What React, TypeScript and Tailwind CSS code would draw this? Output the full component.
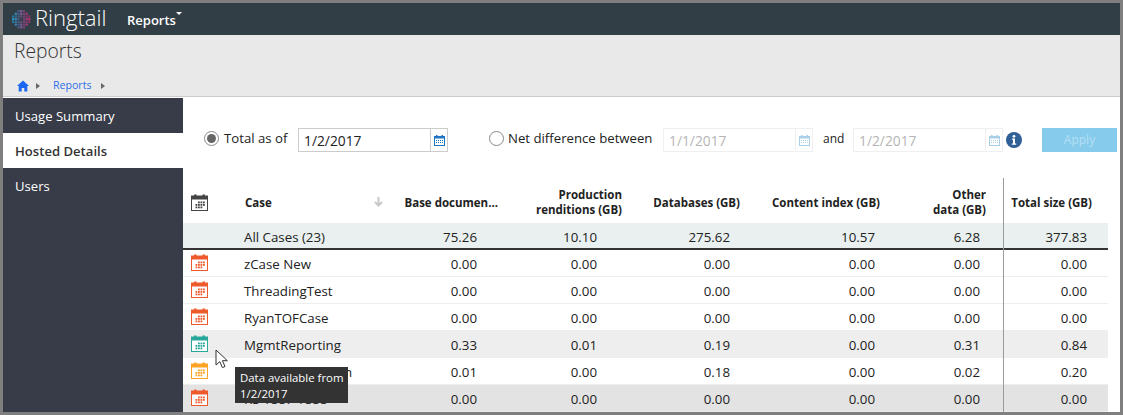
import React from "react";

const FONT = "font-['Open_Sans','Noto_Sans',sans-serif]";

function Logo() {
  const cols = ["#1f9ad0", "#3b86b8", "#566fa6", "#7a5c98", "#96498c", "#ab3a80", "#bb2f78"];
  const mask = [
    [0, 0, 1, 1, 1, 0, 0],
    [0, 1, 1, 1, 1, 1, 0],
    [1, 1, 1, 1, 1, 1, 1],
    [1, 1, 1, 0, 1, 1, 1],
    [1, 1, 1, 1, 1, 1, 1],
    [0, 1, 1, 1, 1, 1, 0],
    [0, 0, 1, 1, 1, 0, 0],
  ];
  return (
    <svg width="19" height="19" viewBox="0 0 19 19" className="shrink-0">
      {mask.map((r, y) =>
        r.map((v, x) =>
          v ? <rect key={x + "-" + y} x={x * 2.7} y={y * 2.7} width="2.2" height="2.2" fill={cols[x]} opacity={y === 2 || y === 4 || x === 2 || x === 4 ? 0.65 : 1} /> : null
        )
      )}
    </svg>
  );
}

function Cal({ color, size = 17 }: { color: string; size?: number }) {
  const dots: React.ReactNode[] = [];
  for (let r = 0; r < 3; r++)
    for (let c = 0; c < 4; c++) {
      if (r === 0 && c === 0) continue;
      if (r === 2 && c === 3) continue;
      dots.push(<rect key={r + "-" + c} x={4.5 + c * 2.5} y={7.5 + r * 2.5} width="1.8" height="1.8" fill={color} />);
    }
  return (
    <svg width={size} height={size} viewBox="0 0 17 17" className="shrink-0">
      <rect x="0.5" y="2" width="16" height="14.5" fill="#fff" stroke={color} />
      <rect x="0" y="2" width="17" height="3.5" fill={color} />
      <rect x="3" y="0.5" width="2.5" height="3" fill={color} />
      <rect x="11.5" y="0.5" width="2.5" height="3" fill={color} />
      {dots}
    </svg>
  );
}

const headPad = ["", "pl-2", "pr-[7px] text-right", "pr-[7px] text-right", "pr-[7px] text-right", "pr-[7px] text-right", "pr-[17px] text-right", "pr-4 text-right border-l border-[#9a9a9a]"];
const cellPad = ["", "pl-[7px] pt-[2px]", "pr-[28px] pt-[2px] text-right", "pr-[32px] pt-[2px] text-right", "pr-[17px] pt-[2px] text-right", "pr-3 pt-[2px] text-right", "pr-[23px] pt-[2px] text-right", "pr-[21px] pt-[2px] text-right border-l border-[#9a9a9a]"];
const GRID = "grid grid-cols-[54px_161px_107px_124px_118px_140px_116px_105px] w-[925px]";

const rows = [
  { n: "zCase New", v: ["0.00", "0.00", "0.00", "0.00", "0.00", "0.00"], c: "#ee5a2c", bg: "bg-white" },
  { n: "ThreadingTest", v: ["0.00", "0.00", "0.00", "0.00", "0.00", "0.00"], c: "#ee5a2c", bg: "bg-white" },
  { n: "RyanTOFCase", v: ["0.00", "0.00", "0.00", "0.00", "0.00", "0.00"], c: "#ee5a2c", bg: "bg-white" },
  { n: "MgmtReporting", v: ["0.33", "0.01", "0.19", "0.00", "0.31", "0.84"], c: "#2aa79b", bg: "bg-[#eeeeee]" },
  { n: "Mgmt Integration", v: ["0.01", "0.00", "0.18", "0.00", "0.02", "0.20"], c: "#fca225", bg: "bg-white" },
  { n: "RS 1887 1888", v: ["0.00", "0.00", "0.00", "0.00", "0.00", "0.00"], c: "#ee5a2c", bg: "bg-[#e3e3e3]" },
];

const heads: React.ReactNode[] = [
  <span>Base documen...</span>,
  <span>Production<br />renditions (GB)</span>,
  <span>Databases (GB)</span>,
  <span>Content index (GB)</span>,
  <span>Other<br />data (GB)</span>,
  <span>Total size (GB)</span>,
];

function DateBox({ value, disabled }: { value: string; disabled?: boolean }) {
  const c = disabled ? "#a9cfe9" : "#1f74c4";
  return (
    <div className={"flex h-6 w-[150px] border " + (disabled ? "border-[#efefef] text-[#b5b5b5]" : "border-[#cccccc] text-[#222]")}>
      <div className="flex-1 pl-[5px] text-[13.8px] leading-[24px]">{value}</div>
      <div className={"flex w-[17px] items-center justify-center border-l " + (disabled ? "border-[#efefef]" : "border-[#cccccc]")}>
        <svg width="11" height="11" viewBox="0 0 11 11">
          <rect x="0.5" y="1.5" width="10" height="9" fill="#fff" stroke={c} />
          <rect y="1" width="11" height="2.5" fill={c} />
          <rect x="2" width="1.5" height="2" fill={c} />
          <rect x="7.5" width="1.5" height="2" fill={c} />
          <path d="M2 5.5h7M2 7.5h7" stroke={c} strokeDasharray="1 1" />
        </svg>
      </div>
    </div>
  );
}

export default function App() {
  return (
    <div className={"relative box-border flex h-[415px] w-[1123px] flex-col overflow-hidden border-[3px] border-[#7f7f7f] bg-white text-[13.3px] text-[#222] " + FONT}>
      <header className="flex h-8 shrink-0 items-center bg-[#323e46] pl-[9px] text-white">
        <Logo />
        <span className="mb-[5px] ml-[4px] w-[72px] text-[22px] font-light leading-none">Ringtail</span>
        <span className="relative mb-[-3px] ml-[20px] text-[13px] font-semibold">
          Reports
          <span className="absolute -right-[6px] top-[1px] h-0 w-0 border-x-[3px] border-t-[3px] border-x-transparent border-t-white" />
        </span>
      </header>

      <div className="flex h-[62px] shrink-0 flex-col border-b border-[#cccccc] bg-[#e9e9e9] pl-[11px]">
        <div className="mt-[2px] text-[19.3px] font-light leading-[27px] text-[#333]">Reports</div>
        <div className="mt-[14px] flex items-center pl-[3px] text-[10.6px] text-[#2f6fe8]">
          <svg width="12" height="12" viewBox="0 0 12 12" fill="#1a66f0"><path d="M6 0.5 0 6h1.7v5.5h3V8h2.6v3.5h3V6H12z" /></svg>
          <span className="ml-[7px] h-0 w-0 border-y-[3.5px] border-l-[4px] border-y-transparent border-l-[#666]" />
          <span className="ml-[13px]">Reports</span>
          <span className="ml-[9px] h-0 w-0 border-y-[3.5px] border-l-[4px] border-y-transparent border-l-[#666]" />
        </div>
      </div>

      <div className="mt-px flex min-h-0 flex-1">
        <nav className="w-[180px] shrink-0 bg-[#373c48] text-[13.1px] text-white">
          <div className="flex h-[35px] items-center pl-3 pt-[3px]">Usage Summary</div>
          <div className="flex h-[35px] items-center bg-white pl-3 pt-[3px] font-semibold text-[#333]">Hosted Details</div>
          <div className="flex h-[35px] items-center pl-3 pt-[3px]">Users</div>
        </nav>

        <main className="min-w-0 flex-1">
          <div className="flex h-[80px] items-start pl-[21px] pt-[30px]">
            <span className="mt-[3px] box-border flex h-[15px] w-[15px] items-center justify-center rounded-full border border-[#888]">
              <span className="h-[9px] w-[9px] rounded-full bg-[#666]" />
            </span>
            <span className="ml-[5px] w-[74px] text-[13.2px] leading-[20px]">Total as of</span>
            <DateBox value="1/2/2017" />
            <span className="ml-[41px] mt-[3px] box-border h-[15px] w-[15px] rounded-full border border-[#888]" />
            <span className="ml-[4px] w-[155px] whitespace-nowrap text-[13.2px] leading-[20px]">Net difference between</span>
            <DateBox value="1/1/2017" disabled />
            <span className="ml-[10px] mt-px w-[30px] text-[12px] leading-[20px]">and</span>
            <DateBox value="1/2/2017" disabled />
            <svg width="16" height="16" viewBox="0 0 16 16" className="ml-[3px] mt-[4px]">
              <circle cx="8" cy="8" r="8" fill="#2f6098" />
              <circle cx="8" cy="4.3" r="1.4" fill="#fff" />
              <path d="M6 6.6h3v5h1.2v1.2H5.8v-1.2H7V7.8H6z" fill="#fff" />
            </svg>
            <button className="ml-[20px] h-6 w-[75px] bg-[#87cbec] text-[12px] text-[#b5dff3]">Apply</button>
          </div>

          <div className={GRID + " h-[45px] items-stretch text-[11.5px] font-bold leading-[15px] text-[#222]"}>
            <div className="flex items-center pl-2 pt-[3px]"><Cal color="#444" /></div>
            <div className={headPad[1] + " flex items-center justify-between pr-[15px] pt-[3px]"}>
              <span>Case</span>
              <svg width="9" height="10" viewBox="0 0 9 10" fill="none" stroke="#c8c8c8" strokeWidth="2">
                <path d="M4.5 0v8M1 5l3.5 3.5L8 5" />
              </svg>
            </div>
            {heads.map((h, i) => (
              <div key={i} className={headPad[i + 2] + " flex items-center justify-end whitespace-nowrap pt-[3px]"}>{h}</div>
            ))}
          </div>

          <div className={GRID + " h-[27px] items-stretch border-b-2 border-[#333] bg-[#e9f0ef] leading-[25px]"}>
            <div />
            <div className={cellPad[1]}>All Cases (23)</div>
            {["75.26", "10.10", "275.62", "10.57", "6.28", "377.83"].map((v, i) => (
              <div key={i} className={cellPad[i + 2]}>{v}</div>
            ))}
          </div>

          {rows.map((r) => (
            <div key={r.n} className={GRID + " h-[27px] items-stretch border-b border-[#eeeeee] leading-[25px] " + r.bg}>
              <div className="flex items-center pb-[2px] pl-2"><Cal color={r.c} /></div>
              <div className={cellPad[1]}>{r.n}</div>
              {r.v.map((v, i) => (
                <div key={i} className={cellPad[i + 2]}>{v}</div>
              ))}
            </div>
          ))}
        </main>
      </div>

      <svg width="15" height="20" viewBox="0 0 15 20" className="absolute left-[212px] top-[346px]">
        <path d="M1 1v15l3.8-3.4 2.6 6 2.6-1.1-2.6-5.8h5z" fill="#fff" stroke="#333" strokeWidth="1" />
      </svg>
      <div className="absolute left-[232px] top-[364px] h-9 w-[113px] whitespace-nowrap bg-[#333333] px-[5px] py-[3px] text-[11.4px] leading-[16px] text-white">
        Data available from<br />1/2/2017
      </div>
    </div>
  );
}
